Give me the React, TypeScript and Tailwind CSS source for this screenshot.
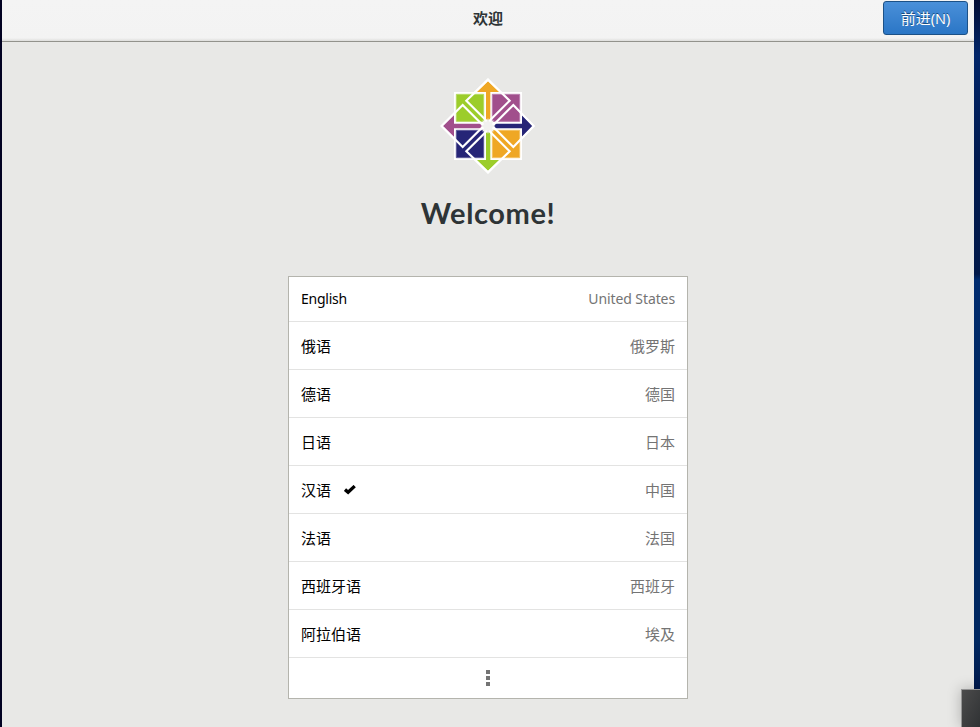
const languages = [
  { name: 'English', country: 'United States', latin: true },
  { name: '俄语', country: '俄罗斯' },
  { name: '德语', country: '德国' },
  { name: '日语', country: '日本' },
  { name: '汉语', country: '中国', selected: true },
  { name: '法语', country: '法国' },
  { name: '西班牙语', country: '西班牙' },
  { name: '阿拉伯语', country: '埃及' },
];

function Logo() {
  return (
    <svg className="block h-[104px] w-[100px]" viewBox="0 0 300 312" aria-hidden="true">
      <path d="M150 12 290 156 150 300 7 156Z" fill="#fff" />
      <path d="M48 54H252V258H48Z" fill="#fff" />
      <path d="M150 21 184 54H157V138L150 145 144 138V54H116Z" fill="#efa724" />
      <path d="M285 156 252 190V163H172L164 156 172 149H252V122Z" fill="#262577" />
      <path d="M150 291 116 258H144V174L150 167 157 174V258H184Z" fill="#9ccd2a" />
      <path d="M13 156 48 122V149H132V163H48V190Z" fill="#a14f8c" />
      <g strokeWidth="3">
        <path d="M55 61H137V142H55Z" fill="#9ccd2a" stroke="#b5da61" />
        <path d="M163 61H245V142H163Z" fill="#a14f8c" stroke="#b87bac" />
        <path d="M55 169H137V251H55Z" fill="#262577" stroke="#5c5a98" />
        <path d="M163 169H245V251H163Z" fill="#efa724" stroke="#f4c160" />
      </g>
      <g fill="none" stroke="#fff" strokeWidth="6.5">
        <path d="M150 17 215 80 150 145 85 80Z" />
        <path d="M287 156 226 93 163 156 226 219Z" />
        <path d="M150 295 215 232 150 167 85 232Z" />
        <path d="M11 156 74 93 137 156 74 219Z" />
      </g>
      <path d="m150 132 5 12 12-5-5 12 10 5-10 5 5 12-12-5-5 12-5-12-12 5 5-12-10-5 10-5-5-12 12 5Z" fill="#f1f1ef" />
    </svg>
  );
}

export default function App() {
  return (
    <div className="relative flex h-[727px] w-[980px] overflow-hidden bg-[#e8e8e6] font-['Noto_Sans_CJK_SC','Noto_Sans',sans-serif]">
      <div className="w-[2px] shrink-0 bg-[#020222]" />
      <main className="flex w-[972px] flex-col">
        <header className="grid h-[42px] shrink-0 grid-cols-[1fr_auto_1fr] border-b border-[#92928c] bg-[linear-gradient(#f4f4f4_0,#f3f3f3_38px,#dededc_41px)]">
          <span />
          <h1 className="pt-[7px] text-[15px] leading-[22px] font-bold text-[#2e3436]">欢迎</h1>
          <button className="mt-px mr-[6px] flex h-[34px] w-[85px] items-center justify-center justify-self-end rounded-[3px] border border-[#1c5187] bg-linear-to-b from-[#4a90d9] to-[#2a76c6] text-[15px] leading-[20px] text-white [text-shadow:0_-1px_#184b80]">
            <span>前进</span>
            <span className="font-['Noto_Sans',sans-serif] text-[14.5px]">(N)</span>
          </button>
        </header>
        <section className="flex flex-col items-center">
          <div className="mt-[32px]">
            <Logo />
          </div>
          <h2 className="mt-[15px] h-[43px] font-['Lato',sans-serif] text-[29px] leading-[40px] font-bold tracking-[0.6px] text-[#2e3436]">Welcome!</h2>
          <ul className="mt-[40px] w-[400px] border border-[#b4b4ad] bg-white">
            {languages.map((language) => (
              <li
                key={language.name}
                className={`flex items-center justify-between border-b border-[#e3e3e2] px-[12px] leading-[20px] ${language.latin ? "h-[45px] font-['Noto_Sans',sans-serif] text-[14px]" : 'h-[48px] text-[15px]'}`}
              >
                <span className="flex items-center text-black">
                  <span className={language.latin ? 'tracking-[-0.25px]' : ''}>{language.name}</span>
                  {language.selected && (
                    <svg className="ml-[13px] h-[10px] w-[12px]" viewBox="0 0 12 10" aria-hidden="true">
                      <path d="M1 4.6 4.1 7.3 10.7 1.1" fill="none" stroke="#000" strokeWidth="3.3" />
                    </svg>
                  )}
                </span>
                <span className={`text-[#747474] ${language.latin ? 'tracking-[-0.1px]' : ''}`}>{language.country}</span>
              </li>
            ))}
            <li className="flex h-[40px] flex-col items-center justify-center gap-[2px]">
              <i className="size-[4px] bg-[#747474]" />
              <i className="size-[4px] bg-[#747474]" />
              <i className="size-[4px] bg-[#747474]" />
            </li>
          </ul>
        </section>
      </main>
      <div className="w-[6px] shrink-0 bg-[linear-gradient(#020c33_0,#02266a_55px,#021b50_160px,#02194a_274px,#002c70_280px,#002861_400px,#002861_640px,#00194b_690px)]" />
      <div className="absolute right-0 bottom-0 h-[38px] w-[19px] border-t border-l border-[#949494] bg-linear-to-br from-[#4c4c4c] to-[#303234] shadow-[0_0_14px_rgba(0,0,0,0.25)]" />
    </div>
  );
}
